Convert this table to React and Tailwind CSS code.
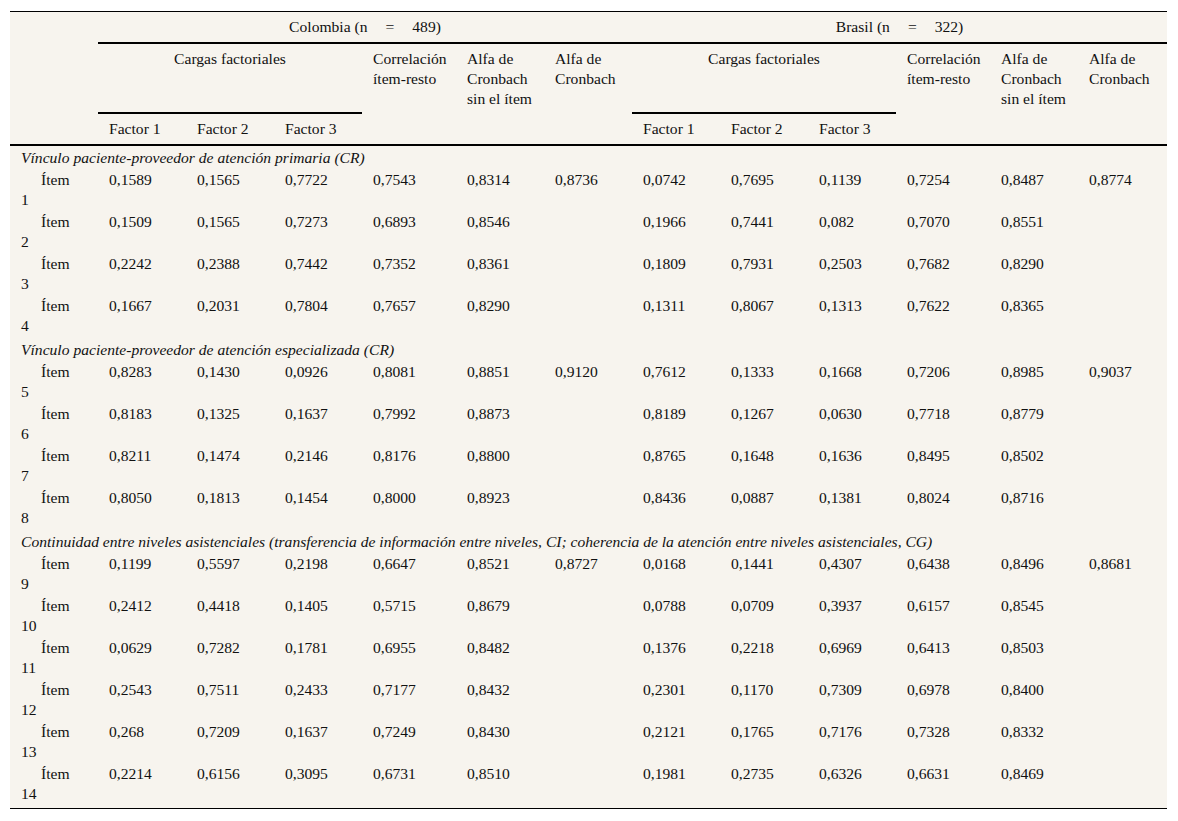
const groups = [
  {
    title: "Vínculo paciente-proveedor de atención primaria (CR)",
    rows: [
      ["1", "0,1589", "0,1565", "0,7722", "0,7543", "0,8314", "0,8736", "0,0742", "0,7695", "0,1139", "0,7254", "0,8487", "0,8774"],
      ["2", "0,1509", "0,1565", "0,7273", "0,6893", "0,8546", "", "0,1966", "0,7441", "0,082", "0,7070", "0,8551", ""],
      ["3", "0,2242", "0,2388", "0,7442", "0,7352", "0,8361", "", "0,1809", "0,7931", "0,2503", "0,7682", "0,8290", ""],
      ["4", "0,1667", "0,2031", "0,7804", "0,7657", "0,8290", "", "0,1311", "0,8067", "0,1313", "0,7622", "0,8365", ""],
    ],
  },
  {
    title: "Vínculo paciente-proveedor de atención especializada (CR)",
    rows: [
      ["5", "0,8283", "0,1430", "0,0926", "0,8081", "0,8851", "0,9120", "0,7612", "0,1333", "0,1668", "0,7206", "0,8985", "0,9037"],
      ["6", "0,8183", "0,1325", "0,1637", "0,7992", "0,8873", "", "0,8189", "0,1267", "0,0630", "0,7718", "0,8779", ""],
      ["7", "0,8211", "0,1474", "0,2146", "0,8176", "0,8800", "", "0,8765", "0,1648", "0,1636", "0,8495", "0,8502", ""],
      ["8", "0,8050", "0,1813", "0,1454", "0,8000", "0,8923", "", "0,8436", "0,0887", "0,1381", "0,8024", "0,8716", ""],
    ],
  },
  {
    title:
      "Continuidad entre niveles asistenciales (transferencia de información entre niveles, CI; coherencia de la atención entre niveles asistenciales, CG)",
    rows: [
      ["9", "0,1199", "0,5597", "0,2198", "0,6647", "0,8521", "0,8727", "0,0168", "0,1441", "0,4307", "0,6438", "0,8496", "0,8681"],
      ["10", "0,2412", "0,4418", "0,1405", "0,5715", "0,8679", "", "0,0788", "0,0709", "0,3937", "0,6157", "0,8545", ""],
      ["11", "0,0629", "0,7282", "0,1781", "0,6955", "0,8482", "", "0,1376", "0,2218", "0,6969", "0,6413", "0,8503", ""],
      ["12", "0,2543", "0,7511", "0,2433", "0,7177", "0,8432", "", "0,2301", "0,1170", "0,7309", "0,6978", "0,8400", ""],
      ["13", "0,268", "0,7209", "0,1637", "0,7249", "0,8430", "", "0,2121", "0,1765", "0,7176", "0,7328", "0,8332", ""],
      ["14", "0,2214", "0,6156", "0,3095", "0,6731", "0,8510", "", "0,1981", "0,2735", "0,6326", "0,6631", "0,8469", ""],
    ],
  },
];

const widths = ["w-[88px]", "w-[88px]", "w-[88px]", "w-[88px]", "w-[94px]", "w-[88px]", "w-[88px]", "w-[88px]", "w-[88px]", "w-[88px]", "w-[94px]", "w-[88px]", "w-[89px]"];

function CountryHead({ label }) {
  return (
    <th colSpan={6} className="border-b-2 border-black pt-[5px] pb-[5px] text-center font-normal">
      {label} (n<span className="mx-[18px]">=</span>
      {label === "Colombia" ? "489" : "322"})
    </th>
  );
}

function SubHead() {
  return (
    <>
      <th colSpan={3} className="border-b-2 border-black pt-[5px] pb-[43px] text-center align-top font-normal">
        Cargas factoriales
      </th>
      <th rowSpan={2} className="border-b-2 border-black pl-[11px] pt-[5px] text-left align-top font-normal whitespace-nowrap">
        Correlación
        <br />
        ítem-resto
      </th>
      <th rowSpan={2} className="border-b-2 border-black pl-[11px] pt-[5px] text-left align-top font-normal whitespace-nowrap">
        Alfa de
        <br />
        Cronbach
        <br />
        sin el ítem
      </th>
      <th rowSpan={2} className="border-b-2 border-black pl-[11px] pt-[5px] text-left align-top font-normal whitespace-nowrap">
        Alfa de
        <br />
        Cronbach
      </th>
    </>
  );
}

function Factors() {
  return (
    <>
      {["Factor 1", "Factor 2", "Factor 3"].map((f) => (
        <th key={f} className="border-b-2 border-black pl-[11px] pt-[5px] pb-[5px] text-left font-normal whitespace-nowrap">
          {f}
        </th>
      ))}
    </>
  );
}

export default function App() {
  return (
    <div className="min-h-screen bg-white pt-[11px] pl-[10px]">
      <div className="w-[1157px] border-t border-b border-black bg-[#f7f4ee] font-['Liberation_Serif','Times_New_Roman',serif] text-[15.6px] leading-[20px] text-[#111]">
        <table className="w-full table-fixed border-separate border-spacing-0">
          <colgroup>
            {widths.map((w, i) => (
              <col key={i} className={w} />
            ))}
          </colgroup>
          <thead>
            <tr>
              <th rowSpan={3} className="border-b-2 border-black"></th>
              <CountryHead label="Colombia" />
              <CountryHead label="Brasil" />
            </tr>
            <tr>
              <SubHead />
              <SubHead />
            </tr>
            <tr>
              <Factors />
              <Factors />
            </tr>
          </thead>
          <tbody>
            {groups.map((g, gi) => (
              <>
                <tr key={"g" + gi}>
                  <td colSpan={13} className="pl-[11px] pt-[2px] pb-[2px] italic whitespace-nowrap">
                    {g.title}
                  </td>
                </tr>
                {g.rows.map((r, ri) => {
                  const last = gi === groups.length - 1 && ri === g.rows.length - 1;
                  return (
                    <tr key={gi + "-" + ri}>
                      <td className={"pl-[11px] align-top " + (last ? "pb-[4px]" : "pb-[2px]")}>
                        <div className="pl-5">Ítem</div>
                        <div>{r[0]}</div>
                      </td>
                      {r.slice(1).map((v, ci) => (
                        <td key={ci} className="pl-[11px] align-top whitespace-nowrap">
                          {v}
                        </td>
                      ))}
                    </tr>
                  );
                })}
              </>
            ))}
          </tbody>
        </table>
      </div>
    </div>
  );
}
